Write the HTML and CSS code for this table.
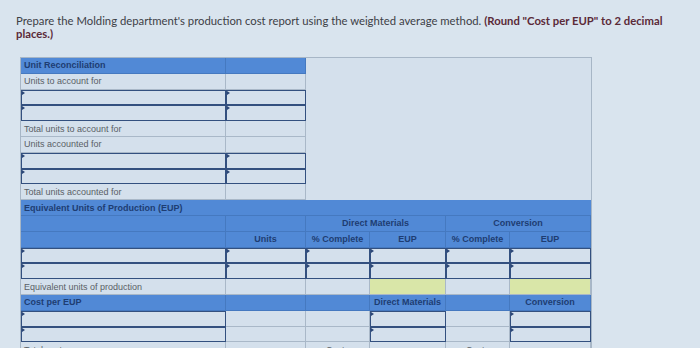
FILE: index.html
```html
<!DOCTYPE html>
<html lang="en">
<head>
<meta charset="utf-8">
<title>Production cost report</title>
<link rel="stylesheet" href="styles.css">
</head>
<body>
<p class="prompt">Prepare the Molding department's production cost report using the weighted average method. <strong>(Round "Cost per EUP" to 2 decimal</strong> <strong>places.)</strong></p>

<div class="report">
  <div class="recon">
    <div class="row head"><div class="c lbl b">Unit Reconciliation</div><div class="c"></div></div>
    <div class="row"><div class="c lbl">Units to account for</div><div class="c"></div></div>
    <div class="row"><div class="c in"></div><div class="c in"></div></div>
    <div class="row"><div class="c in"></div><div class="c in"></div></div>
    <div class="row"><div class="c lbl">Total units to account for</div><div class="c"></div></div>
    <div class="row"><div class="c lbl">Units accounted for</div><div class="c"></div></div>
    <div class="row"><div class="c in"></div><div class="c in"></div></div>
    <div class="row"><div class="c in"></div><div class="c in"></div></div>
    <div class="row"><div class="c lbl">Total units accounted for</div><div class="c"></div></div>
  </div>

  <div class="eup">
    <div class="row head"><div class="c lbl b full">Equivalent Units of Production (EUP)</div></div>
    <div class="row head"><div class="c"></div><div class="c"></div><div class="c ctr b span2">Direct Materials</div><div class="c ctr b span2">Conversion</div></div>
    <div class="row head"><div class="c"></div><div class="c ctr b">Units</div><div class="c ctr b">% Complete</div><div class="c ctr b">EUP</div><div class="c ctr b">% Complete</div><div class="c ctr b">EUP</div></div>
    <div class="row"><div class="c in"></div><div class="c in"></div><div class="c in"></div><div class="c in"></div><div class="c in"></div><div class="c in"></div></div>
    <div class="row"><div class="c in"></div><div class="c in"></div><div class="c in"></div><div class="c in"></div><div class="c in"></div><div class="c in"></div></div>
    <div class="row"><div class="c lbl">Equivalent units of production</div><div class="c"></div><div class="c"></div><div class="c calc"></div><div class="c"></div><div class="c calc"></div></div>
    <div class="row head"><div class="c lbl b">Cost per EUP</div><div class="c"></div><div class="c"></div><div class="c ctr b">Direct Materials</div><div class="c"></div><div class="c ctr b">Conversion</div></div>
    <div class="row"><div class="c in"></div><div class="c"></div><div class="c"></div><div class="c in"></div><div class="c"></div><div class="c in"></div></div>
    <div class="row"><div class="c in"></div><div class="c"></div><div class="c"></div><div class="c in"></div><div class="c"></div><div class="c in"></div></div>
    <div class="row"><div class="c lbl">Total costs</div><div class="c"></div><div class="c ctr">Costs</div><div class="c"></div><div class="c ctr">Costs</div><div class="c"></div></div>
  </div>
</div>
</body>
</html>
```
FILE: styles.css
```css
html, body {
  margin: 0;
  padding: 0;
  background: #d9e4ee;
}
body {
  padding: 14px 16px 0 16px;
  font-family: "Lato", "Liberation Sans", sans-serif;
  overflow: hidden;
}
.prompt {
  margin: 0 0 17px 0;
  width: 670px;
  font-size: 11.3px;
  line-height: 13px;
  color: #3d4046;
}
.prompt strong {
  color: #5b2a38;
  font-weight: 700;
}
.report {
  margin-left: 4px;
  width: 570px;
  border: 1px solid #a7b6c6;
  background: #d4e0ec;
  font-family: "Liberation Sans", Arial, sans-serif;
  font-size: 9px;
  color: #5a5f66;
}
.row {
  display: grid;
  height: 15.8px;
}
.recon .row {
  grid-template-columns: 205px 80px;
}
.eup .row {
  grid-template-columns: 205px 80px 64px 76px 64px 81px;
}
.c {
  position: relative;
  box-sizing: border-box;
  display: flex;
  align-items: center;
  border-right: 1px solid #a9b8c8;
  border-bottom: 1px solid #a9b8c8;
  white-space: nowrap;
  overflow: hidden;
}
.lbl {
  padding-left: 3px;
}
.ctr {
  justify-content: center;
}
.b {
  font-weight: 700;
  color: #1e3d72;
}
.full {
  grid-column: 1 / -1;
}
.span2 {
  grid-column: span 2;
}
.head .c {
  background: #5189d6;
  border-color: #4579c0;
}
.eup .row.head:first-child .c {
  border-right: none;
}
.calc {
  background: #d9e6a8;
}
.in {
  border: 1px solid #33507f;
  background: #d4e0ec;
}
.in::before {
  content: "";
  position: absolute;
  left: 0;
  top: 0;
  border-left: 3px solid #2b4676;
  border-top: 2px solid transparent;
  border-bottom: 2px solid transparent;
}
```
